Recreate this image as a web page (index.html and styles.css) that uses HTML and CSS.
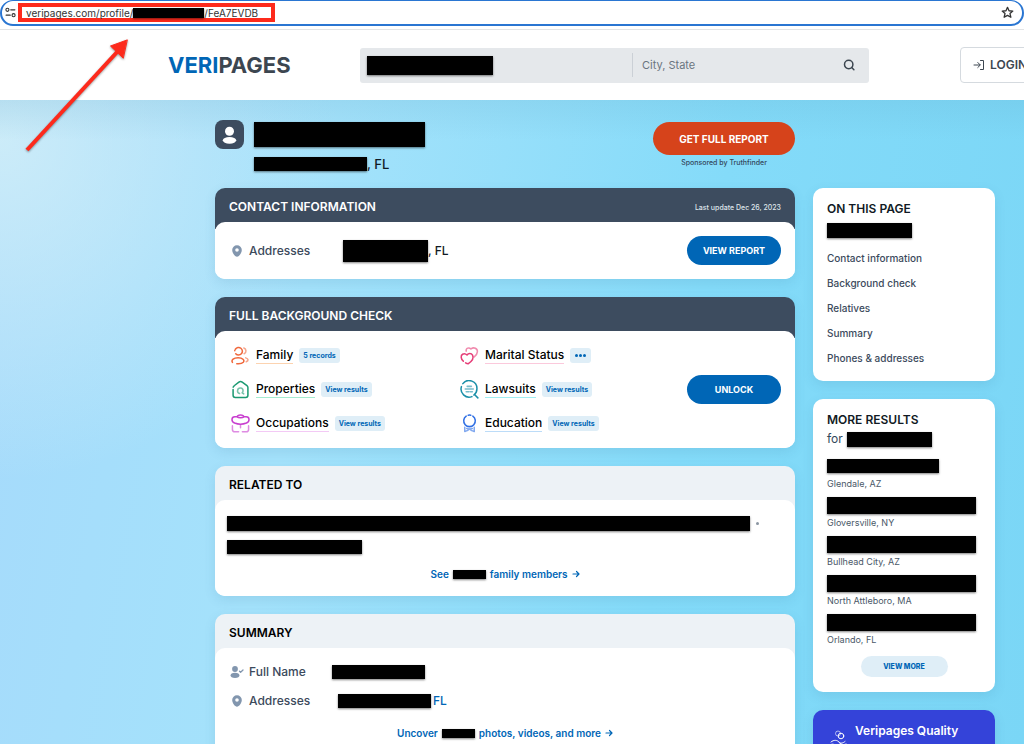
FILE: index.html
```html
<!DOCTYPE html>
<html lang="en">
<head>
  <meta charset="utf-8">
  <title>Veripages</title>
  <link rel="stylesheet" href="styles.css">
</head>
<body>
  <div class="browser">
    <div class="address-bar">
      <svg class="tune" viewBox="0 0 10 10"><circle cx="2.2" cy="2.6" r="1.4"/><path d="M5.2 2.6H9M1 7.4h3.8"/><circle cx="7.8" cy="7.4" r="1.4"/></svg>
      <div class="url">veripages.com/profile/<span class="bar bar-url"></span>/FeA7EVDB</div>
      <svg class="star" viewBox="0 0 12 12"><path d="M6 1.2l1.4 3.2 3.5.3-2.6 2.3.8 3.4L6 8.6l-3.1 1.8.8-3.4L1.100 4.700l3.500-.3z"/></svg>
    </div>
  </div>

  <header class="header">
    <a class="logo" href="#"><span>VERI</span>PAGES</a>
    <form class="search">
      <div class="search-name"><input type="text" aria-label="Name"><span class="bar bar-search"></span></div>
      <input class="search-city" type="text" placeholder="City, State" aria-label="City, State">
      <button class="search-btn" type="button" aria-label="Search">
        <svg viewBox="0 0 12 12"><circle cx="5.700" cy="5.500" r="4.200"/><path d="M8.700 8.500l2.200 2.200"/></svg>
      </button>
    </form>
    <a class="login" href="#">
      <svg viewBox="0 0 12 12"><path d="M1 6h6M4.800 3.500L7.300 6 4.800 8.500M7.500 1.500h3v9h-3"/></svg>
      LOGIN
    </a>
  </header>

  <div class="page">
    <main class="main">
      <section class="profile">
        <div class="avatar">
          <svg viewBox="0 0 29 29"><circle cx="14.500" cy="11.200" r="4.500"/><ellipse cx="14.500" cy="20.300" rx="6.700" ry="3.400"/></svg>
        </div>
        <div class="person">
          <h1><span class="bar bar-title"></span></h1>
          <p><span class="bar bar-city"></span>, FL</p>
        </div>
        <div class="report">
          <button class="btn-report" type="button">GET FULL REPORT</button>
          <small>Sponsored by Truthfinder</small>
        </div>
      </section>

      <section class="card dark">
        <div class="card-head">
          <h2>CONTACT INFORMATION</h2>
          <small>Last update Dec 26, 2023</small>
        </div>
        <div class="card-body contact">
          <svg class="icon-sm" viewBox="0 0 14 14"><path class="fill" fill-rule="evenodd" d="M7 1.200a4.800 4.800 0 0 0-4.800 4.900C2.200 9.200 5 12.800 7 12.800s4.800-3.600 4.800-6.700A4.800 4.800 0 0 0 7 1.200zM7 4.200a1.800 1.800 0 1 1 0 3.600 1.800 1.800 0 0 1 0-3.600z"/></svg>
          <span class="label">Addresses</span>
          <span class="value"><span class="bar bar-address"></span>, FL</span>
          <button class="btn" type="button">VIEW REPORT</button>
        </div>
      </section>

      <section class="card dark">
        <div class="card-head"><h2>FULL BACKGROUND CHECK</h2></div>
        <div class="card-body check">
          <ul class="records">
            <li class="family">
              <svg viewBox="0 0 20 20"><path d="M4.600 3.400A4 4 0 1 1 5 8.200M4 5V4.600M1.500 17.200c-1.500-2.600 1.300-4.800 6-4.800s7.200 2.500 5.400 4.800c-1.400 1.600-4.400 1.700-6.800 1.500"/><path class="light" d="M13.500 2.200a3.200 3.200 0 0 1 .3 6M15.500 12.500c2.800.7 3.400 3 .6 4"/></svg>
              <a href="#">Family</a><span class="tag">5 records</span>
            </li>
            <li class="marital">
              <svg viewBox="0 0 20 20"><path class="light" d="M6.500 5.500C6 2 9.500 1 11.500 3.200c3-2.600 7.200-.5 6.800 3-.2 2.300-1.600 4-3.300 5.300"/><path d="M3.500 16C.8 13.800.5 10 2.700 8.700c1.700-1 3.500-.4 4.700.8 1.400-2.200 4.500-2.300 5.800 0 1.700 3.200-.9 6.600-4.700 9.200-1 0-1.800-.4-2.600-.9"/></svg>
              <a href="#">Marital Status</a><span class="tag dots"><i></i><i></i><i></i></span>
            </li>
            <li class="properties">
              <svg viewBox="0 0 20 20"><path d="M2.200 10v6c0 1.500.8 2.300 2.300 2.300h11c1.500 0 2.300-.8 2.300-2.300V8c0-.8-.4-1.500-1-2l-5-3.700c-1.200-.9-2.300-.9-3.500 0L3.700 5.800c-.7.500-1.200 1-1.400 1.700"/><path class="light" d="M9 14.200a2.900 2.900 0 1 1 3.700-2.800c0 1-.4 1.600-1 2.100l1.700 1.100"/></svg>
              <a href="#">Properties</a><span class="tag">View results</span>
            </li>
            <li class="lawsuits">
              <svg viewBox="0 0 20 20"><path d="M3 3.800A8.300 8.300 0 0 1 17.800 9.500c0 2.800-1.200 4.800-3.200 6.300M1.500 7A8.500 8.500 0 0 0 12.500 17.500M15.500 15.500l3.300 3.300"/><path class="light" d="M7.500 6.700h4.500M5.500 9.500h8.500M6.500 12.300h3M11 12.300h2"/></svg>
              <a href="#">Lawsuits</a><span class="tag">View results</span>
            </li>
            <li class="occupations">
              <svg viewBox="0 0 20 20"><path d="M6.500 3c.3-2.600 6.700-2.600 7 0M13.500 3H16c3.600 0 4.200 4.800.2 6.500-3.800 1.500-8.600 1.500-12.400 0C-.2 7.800.4 3 4 3h2.500c1.200 1.200 5.800 1.200 7 0"/><path class="light" d="M1.500 12.500v3.700c0 1.600.8 2.500 2.500 2.500h4M18.500 12.500v3.700c0 1.600-.8 2.500-2.500 2.500h-4M10 11.500v3"/></svg>
              <a href="#">Occupations</a><span class="tag">View results</span>
            </li>
            <li class="education">
              <svg viewBox="0 0 20 20"><path d="M6.500 2.200a6.100 6.100 0 1 0 7 0M8.700 1.300c.9-.2 1.800-.2 2.600 0"/><path class="light" d="M5 14v4.500l3-1.300M8 17.200l2-1.600 2 1.600M12 17.200l3 1.300V14M7 15.200h1.500M11.500 15.200H13"/></svg>
              <a href="#">Education</a><span class="tag">View results</span>
            </li>
          </ul>
          <button class="btn" type="button">UNLOCK</button>
        </div>
      </section>

      <section class="card">
        <div class="card-head"><h2>RELATED TO</h2></div>
        <div class="card-body related">
          <p><span class="bar bar-related"></span><i class="dot"></i></p>
          <p><span class="bar bar-related-short"></span></p>
          <a class="more" href="#">See <span class="bar bar-inline"></span> family members <svg viewBox="0 0 8 8"><path d="M1 4h6M4.500 1.500L7 4 4.500 6.500"/></svg></a>
        </div>
      </section>

      <section class="card">
        <div class="card-head"><h2>SUMMARY</h2></div>
        <div class="card-body summary">
          <div class="row">
            <svg class="icon-sm" viewBox="0 0 14 14"><circle class="fill" cx="5" cy="4" r="2.900"/><ellipse class="fill" cx="5" cy="10.300" rx="4.400" ry="2.600"/><path class="stroke" d="M9.500 6.200l1.100 1.100L13 5"/></svg>
            <span class="label">Full Name</span>
            <span class="value"><span class="bar bar-fullname"></span></span>
          </div>
          <div class="row">
            <svg class="icon-sm" viewBox="0 0 14 14"><path class="fill" fill-rule="evenodd" d="M7 1.200a4.800 4.800 0 0 0-4.800 4.900C2.200 9.200 5 12.800 7 12.800s4.800-3.600 4.800-6.700A4.800 4.800 0 0 0 7 1.200zM7 4.200a1.800 1.800 0 1 1 0 3.600 1.800 1.800 0 0 1 0-3.600z"/></svg>
            <span class="label">Addresses</span>
            <a class="value indent" href="#"><span class="bar bar-fullname"></span>FL</a>
          </div>
          <a class="more" href="#">Uncover <span class="bar bar-inline"></span> photos, videos, and more <svg viewBox="0 0 8 8"><path d="M1 4h6M4.500 1.500L7 4 4.500 6.500"/></svg></a>
        </div>
      </section>
    </main>

    <aside class="side">
      <nav class="box on-page">
        <h3>ON THIS PAGE</h3>
        <span class="bar bar-side"></span>
        <a href="#">Contact information</a>
        <a href="#">Background check</a>
        <a href="#">Relatives</a>
        <a href="#">Summary</a>
        <a href="#">Phones &amp; addresses</a>
      </nav>

      <section class="box results">
        <h3>MORE RESULTS</h3>
        <p class="for">for <span class="bar bar-side"></span></p>
        <ul>
          <li><span class="name"><span class="bar bar-short"></span></span>Glendale, AZ</li>
          <li><span class="name"><span class="bar bar-result"></span></span>Gloversville, NY</li>
          <li><span class="name"><span class="bar bar-result"></span></span>Bullhead City, AZ</li>
          <li><span class="name"><span class="bar bar-result"></span></span>North Attleboro, MA</li>
          <li><span class="name"><span class="bar bar-result"></span></span>Orlando, FL</li>
        </ul>
        <button class="btn-more" type="button">VIEW MORE</button>
      </section>

      <section class="box quality">
        <svg viewBox="0 0 24 28"><circle cx="11" cy="4.500" r="2.500" opacity=".6"/><circle cx="14" cy="7" r="2.800"/><path d="M4 13c3-2.500 6-2 8 0s4 1 6-.5M3.500 15.500c3-1 5 0 6.500 2M12 13.500c3 2.500 4.500 2.500 7 1.500M10 17.500L6 25M12 17l4 8"/></svg>
        <h3>Veripages Quality</h3>
      </section>
    </aside>
  </div>

  <svg class="arrow" viewBox="0 0 110 120"><path class="shaft" d="M7 112L98 13"/><path class="head" d="M107 2L90.500 8 103 20z"/></svg>
</body>
</html>
```
FILE: styles.css
```css
* {
  box-sizing: border-box;
}
body {
  margin: 0;
  height: 100vh;
  display: flex;
  flex-direction: column;
  overflow: hidden;
  font-family: Inter, "Liberation Sans", sans-serif;
  font-size: 12px;
  line-height: 16px;
  color: #111a24;
  background-color: white;
}
h1, h2, h3, p, ul {
  margin: 0;
  padding: 0;
}
ul {
  list-style: none;
}
a {
  color: inherit;
  text-decoration: none;
}
button {
  font-family: inherit;
  cursor: pointer;
  border: none;
  padding: 0;
}
svg {
  fill: none;
  stroke: currentColor;
  stroke-linecap: round;
  stroke-linejoin: round;
  flex: none;
}

/* browser address bar */
.browser {
  flex: none;
  padding-bottom: 3px;
  border-bottom: 1px solid #e2e4e6;
}
.address-bar {
  display: flex;
  align-items: center;
  height: 26px;
  padding: 0 8px 0 3px;
  border: 2px solid #2a76d2;
  border-top-width: 1px;
  border-radius: 13px;
}
.tune {
  width: 11px;
  height: 11px;
  stroke: #333;
}
.url {
  display: flex;
  align-items: center;
  width: 257px;
  height: 19px;
  margin-left: 2px;
  padding-left: 4px;
  border: 4px solid #fd2a1c;
  font-size: 10px;
  color: #333;
}
.star {
  width: 13px;
  height: 13px;
  margin-left: auto;
  stroke: #333;
  stroke-width: 1.2;
}

/* redacted text */
.bar {
  display: inline-block;
  flex: none;
  height: 14px;
  background-color: #000;
  box-shadow: 0 1px 2px rgba(0,0,0,0.5);
}
.bar-url {
  width: 71px;
  height: 10px;
}
.bar-search {
  width: 126px;
  height: 19px;
}
.bar-title {
  width: 171px;
  height: 25px;
}
.bar-city {
  width: 113px;
}
.bar-address {
  width: 85px;
  height: 22px;
}
.bar-related {
  width: 523px;
  height: 15px;
}
.bar-related-short {
  width: 135px;
}
.bar-inline {
  width: 33px;
  height: 9px;
}
.bar-fullname {
  width: 93px;
}
.bar-side {
  width: 85px;
  height: 15px;
}
.bar-short {
  width: 112px;
}
.bar-result {
  width: 149px;
  height: 17px;
}

/* header */
.header {
  flex: none;
  display: flex;
  align-items: center;
  height: 70px;
  padding-left: 168px;
  white-space: nowrap;
}
.logo {
  flex: none;
  width: 192px;
  font-size: 22px;
  font-weight: 700;
  line-height: 28px;
  color: #3c4650;
}
.logo span {
  color: #0066b6;
}
.search {
  flex: 1 0 auto;
  display: flex;
  align-items: center;
  height: 35px;
  background-color: #e5e8eb;
  border-radius: 3px;
}
.search input {
  min-width: 0;
  border: none;
  background: none;
  font-family: inherit;
  font-size: 11px;
}
.search input::placeholder {
  color: #6a7580;
}
.search-name {
  display: flex;
  align-items: center;
  width: 273px;
  height: 24px;
  padding-left: 7px;
  border-right: 1px solid #cbd0d6;
}
.search-name input {
  order: 2;
  flex: 1;
}
.search .search-city {
  flex: 1;
  padding: 0 9px;
}
.search-btn {
  width: 40px;
  height: 35px;
  background: none;
  color: #3c4650;
}
.search-btn svg {
  display: block;
  width: 12px;
  height: 12px;
  margin: 0 auto;
  stroke-width: 1.500;
}
.login {
  flex: none;
  display: flex;
  align-items: center;
  gap: 5px;
  width: 92px;
  height: 36px;
  margin: 0 -28px 0 91px;
  padding-left: 12px;
  border: 1px solid #d5dadf;
  border-radius: 4px;
  font-weight: 600;
  color: #3c4650;
}
.login svg {
  width: 12px;
  height: 12px;
}

/* page */
.page {
  flex: 1;
  min-height: 0;
  display: grid;
  grid-template-columns: 1fr 182px;
  column-gap: 18px;
  padding: 20px 29px 0 215px;
  background:
    linear-gradient(rgba(90,160,190,0.15), rgba(90,160,190,0) 40px),
    radial-gradient(circle at 0 40px, rgba(213,240,248,0.8), rgba(213,240,248,0) 340px),
    linear-gradient(100deg, #a6dafb 0%, #a4e2fb 30%, #84dbf9 65%, #7ad6f6 100%);
}

.profile {
  display: flex;
  height: 68px;
}
.avatar {
  width: 29px;
  height: 29px;
  border-radius: 8px;
  background-color: #3d4c5f;
}
.avatar svg {
  display: block;
  fill: white;
  stroke: none;
}
.person {
  margin-left: 10px;
  padding-top: 2px;
}
.person h1 {
  display: flex;
  height: 34px;
}
.person p {
  display: flex;
  align-items: center;
  font-size: 13px;
  font-weight: 500;
}
.report {
  display: flex;
  flex-direction: column;
  align-items: center;
  margin-left: auto;
  padding-top: 2px;
}
.report small {
  font-size: 7px;
  font-weight: 500;
  line-height: 16px;
  color: #33475b;
}
.btn-report {
  width: 142px;
  height: 33px;
  border-radius: 17px;
  background-color: #d6431b;
  font-size: 10px;
  font-weight: 700;
  color: white;
}

.card {
  margin-bottom: 18px;
  border-radius: 10px;
  background: linear-gradient(#edf2f6 44px, white 44px);
  box-shadow: 0 4px 12px rgba(40,100,140,0.12);
}
.card.dark {
  background: linear-gradient(#3d4c5f 41px, white 41px);
}
.card-head {
  display: flex;
  align-items: center;
  justify-content: space-between;
  height: 34px;
  padding: 3px 14px 0;
  color: #000;
}
.dark .card-head {
  color: white;
}
.card-head h2 {
  font-size: 12px;
  font-weight: 600;
}
.card-head small {
  padding-top: 3px;
  font-size: 7px;
  font-weight: 500;
  color: #dfe4ea;
}
.card-body {
  border-radius: 10px;
  background-color: white;
}
.icon-sm {
  width: 14px;
  height: 14px;
}
.icon-sm .fill {
  fill: #8296ae;
  stroke: none;
}
.icon-sm .stroke {
  stroke: #8296ae;
  stroke-width: 1.300;
}
.label {
  margin-left: 5px;
  color: #3b4a5c;
  font-weight: 500;
}
.value {
  display: flex;
  align-items: center;
  font-weight: 500;
}
.btn {
  width: 94px;
  height: 29px;
  margin-left: auto;
  border-radius: 15px;
  background-color: #0066b6;
  font-size: 9px;
  font-weight: 700;
  color: white;
}

.contact {
  display: flex;
  align-items: center;
  height: 57px;
  padding: 0 14px 0 15px;
}
.contact .label {
  width: 94px;
}

.check {
  display: flex;
  align-items: center;
  padding: 12px 14px 13px 16px;
}
.records {
  display: grid;
  grid-template-columns: 229px 225px;
  row-gap: 10px;
}
.records li {
  display: flex;
  align-items: center;
  height: 24px;
}
.records svg {
  width: 19px;
  height: 19px;
  stroke-width: 1.600;
}
.records .light {
  opacity: 0.6;
}
.records a {
  margin: 0 6px;
  border-bottom: 1px solid;
  border-color: inherit;
  color: #000;
  font-weight: 500;
  line-height: 17px;
}
.family { color: #f0683c; border-color: #fcd3b0; }
.marital { color: #e63e78; border-color: #fbc9dc; }
.properties { color: #1c9a72; border-color: #a5ecd0; }
.lawsuits { color: #1a8fa8; border-color: #a0eef2; }
.occupations { color: #c83ecf; border-color: #f3c9f5; }
.education { color: #2f6fe4; border-color: #bcdcf8; }
.tag {
  padding: 0 4px;
  border-radius: 3px;
  background-color: #dfeef7;
  font-size: 7px;
  font-weight: 700;
  line-height: 15px;
  color: #0066b6;
}
.dots {
  display: flex;
  align-items: center;
  gap: 1px;
  height: 15px;
  padding: 0 5px;
}
.dots i {
  width: 3px;
  height: 3px;
  border-radius: 50%;
  background-color: #0066b6;
}

.related {
  display: flex;
  flex-direction: column;
  height: 96px;
  padding: 12px;
}
.related p {
  display: flex;
  align-items: center;
  height: 23px;
}
.dot {
  width: 3px;
  height: 3px;
  margin-left: 6px;
  border-radius: 50%;
  background-color: #8b96a2;
}
.more {
  display: flex;
  align-items: center;
  justify-content: center;
  gap: 4px;
  height: 16px;
  font-size: 10px;
  font-weight: 600;
  color: #0066b6;
}
.related .more {
  margin-top: 8px;
}
.more svg {
  width: 8px;
  height: 8px;
  stroke-width: 1.200;
}

.summary {
  height: 112px;
  padding: 9px 15px;
}
.row {
  display: flex;
  align-items: center;
  height: 29px;
}
.row .label {
  width: 83px;
}
.row .value {
  color: #0066b6;
  gap: 2px;
}
.row .indent {
  margin-left: 6px;
}
.summary .more {
  margin-top: 10px;
}

/* sidebar */
.side {
  padding-top: 68px;
}
.box {
  margin-bottom: 18px;
  padding: 13px 14px;
  border-radius: 10px;
  background-color: white;
  box-shadow: 0 4px 12px rgba(40,100,140,0.12);
}
.box h3 {
  font-size: 12px;
  font-weight: 600;
  line-height: 16px;
}
.on-page {
  display: flex;
  flex-direction: column;
  height: 193px;
}
.on-page .bar {
  margin: 6px 0 8px;
}
.on-page a {
  font-size: 10px;
  font-weight: 500;
  line-height: 25px;
  color: #3b4a5c;
}
.results {
  display: flex;
  flex-direction: column;
  height: 293px;
}
.for {
  display: flex;
  align-items: center;
  gap: 4px;
  height: 22px;
  color: #33475b;
}
.results ul {
  margin-top: 6px;
}
.results li {
  height: 39px;
  font-size: 9px;
  line-height: 15px;
  color: #4a5868;
}
.name {
  display: flex;
  align-items: center;
  height: 20px;
}
.btn-more {
  align-self: center;
  width: 87px;
  height: 21px;
  margin-top: 5px;
  border-radius: 11px;
  background-color: #dfeef7;
  font-size: 7px;
  font-weight: 800;
  color: #0066b6;
}
.quality {
  display: flex;
  gap: 4px;
  height: 90px;
  background-color: #3443d9;
  color: white;
}
.quality svg {
  width: 24px;
  height: 28px;
  margin-top: 6px;
}

/* pointer drawn over the page */
.arrow {
  position: absolute;
  top: 38px;
  left: 20px;
  width: 110px;
  height: 120px;
  filter: drop-shadow(0 1px 1px rgba(0,0,0,0.4));
}
.arrow .shaft {
  stroke: #fd2a1c;
  stroke-width: 4;
  stroke-linecap: butt;
}
.arrow .head {
  fill: #fd2a1c;
  stroke: #fd2a1c;
}
```
